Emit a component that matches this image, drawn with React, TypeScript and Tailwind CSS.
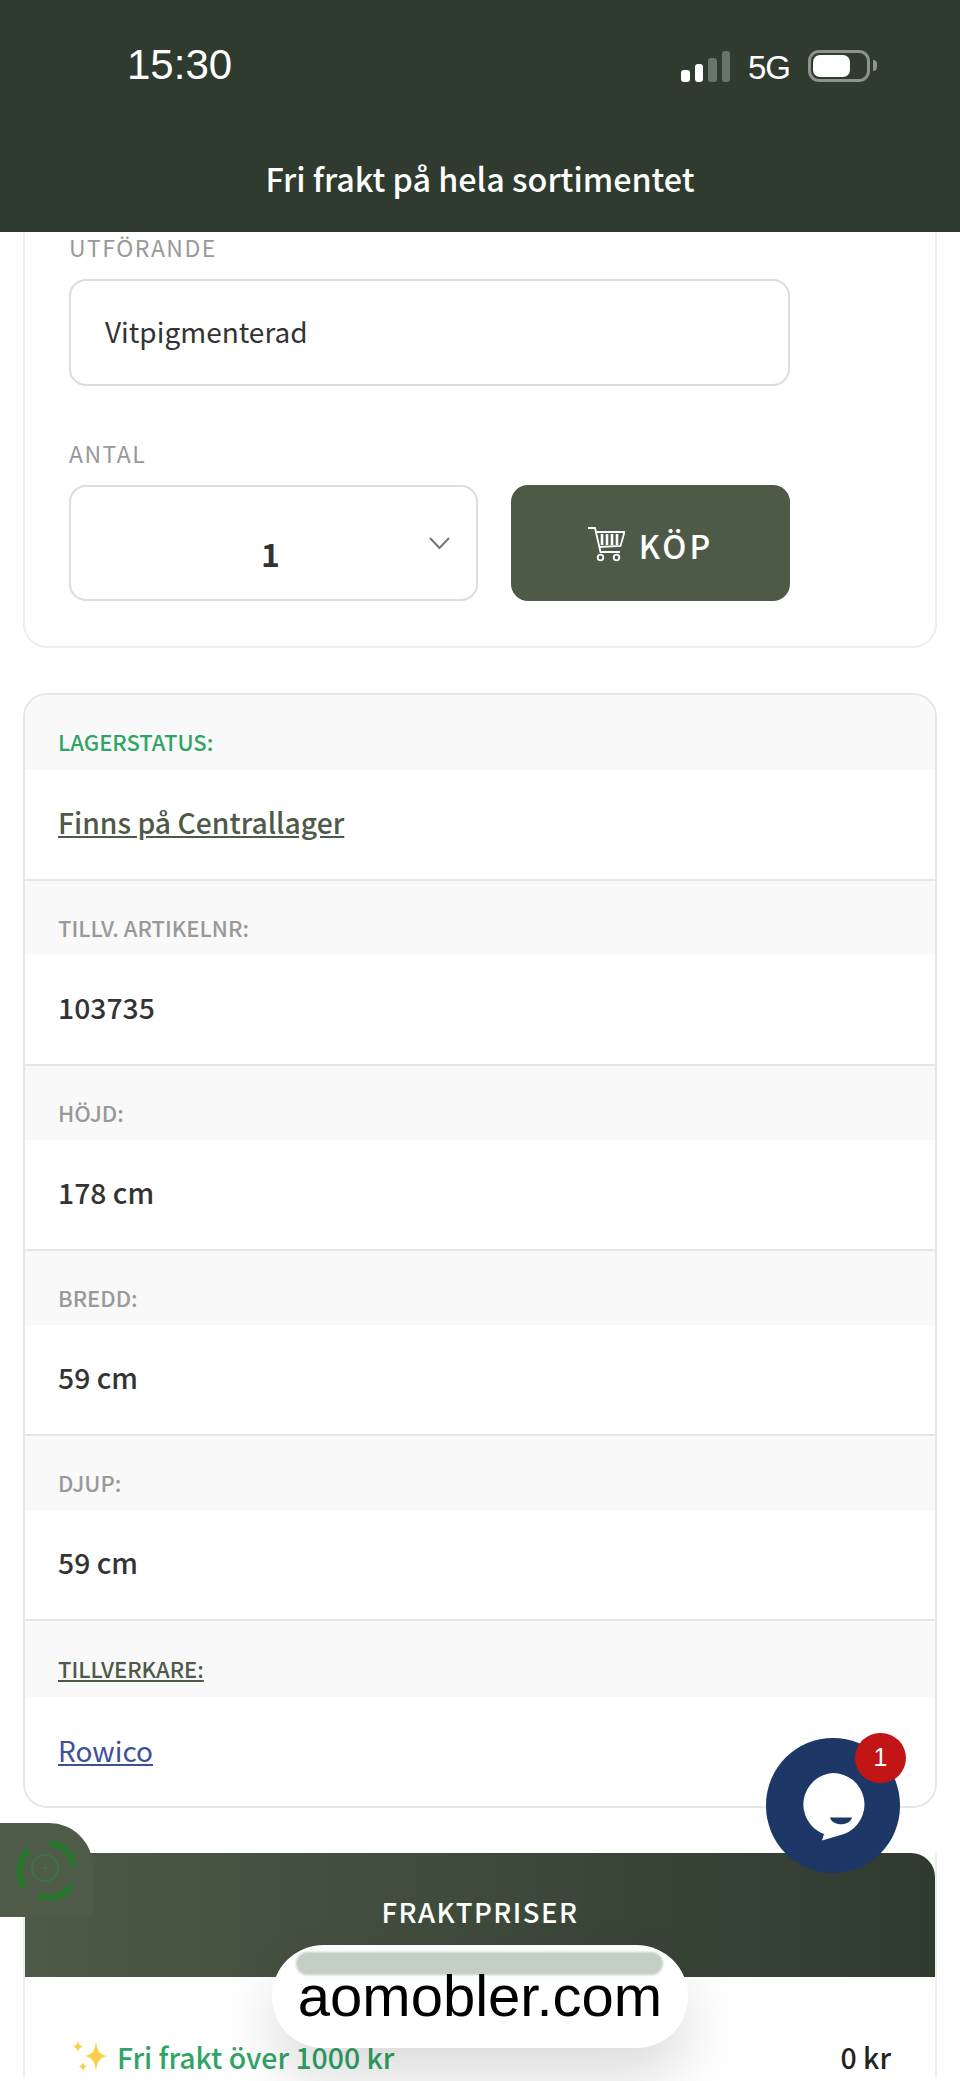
const SANS = "font-['Noto_Sans_CJK_SC','Noto_Sans',sans-serif]";
const SYSTEM = "font-['Liberation_Sans',sans-serif]";

const SPECS = [
  { label: "TILLV. ARTIKELNR:", value: "103735" },
  { label: "HÖJD:", value: "178 cm" },
  { label: "BREDD:", value: "59 cm" },
  { label: "DJUP:", value: "59 cm" },
];

function CartIcon() {
  return (
    <svg width="37" height="35" viewBox="0 0 37 35" fill="none" stroke="white" strokeWidth="1.8">
      <path d="M0 1h7l5.500 24H32" />
      <path d="M7.500 5h29l-4 14-21.500 1" />
      <path d="M14 7v11M19 7v11M24 7v11M29 7v11" strokeWidth="2.6" />
      <circle cx="12.500" cy="30.500" r="2.800" />
      <circle cx="28.500" cy="30.500" r="2.800" />
    </svg>
  );
}

function Sparkles() {
  return (
    <svg width="40" height="40" viewBox="0 0 40 40" fill="#fbcf4a">
      <path d="M25 4c1 9 3 14 12 15-9 1-11 7-12 15-1-8-3-14-12-15 9-1 11-6 12-15z" />
      <path d="M7 3c.5 4 1.500 5.500 5 6.500-3.500 1-4.500 2.500-5 6.500-.5-4-1.500-5.500-5-6.500 3.500-1 4.500-2.500 5-6.500z" />
      <path d="M12 24c.5 3.500 1.200 4.700 4.500 5.500-3.300.8-4 2-4.500 5.500-.5-3.500-1.200-4.700-4.500-5.500 3.300-.8 4-2 4.500-5.500z" />
    </svg>
  );
}

function SpecRow({ label, value }: { label: string; value: string }) {
  return (
    <div className="border-b-2 border-[#e6e6e6]">
      <div className="flex h-[74px] items-end bg-[#f9f9f9] px-[33px] pb-[14px] text-[22px] font-medium leading-[28px] text-[#999]">{label}</div>
      <div className="flex h-[109px] items-center bg-white px-[33px] pb-[4px] text-[28.300px] font-medium text-[#333]">{value}</div>
    </div>
  );
}

export default function App() {
  return (
    <div className={`relative h-[2081px] w-[960px] overflow-hidden bg-white ${SANS}`}>
      {/* Status bar + promo banner */}
      <header className="relative z-10 flex h-[232px] flex-col bg-[#2f3b2f] text-white">
        <div className={`flex h-[130px] items-center justify-between pl-[127px] pr-[83px] ${SYSTEM}`}>
          <span className="text-[42px] leading-none">15:30</span>
          <div className="flex items-end gap-[18px] pt-[1px]">
            <div className="flex items-end gap-[5px]">
              <div className="h-[12px] w-[9px] rounded-[3px] bg-white" />
              <div className="h-[18px] w-[8px] rounded-[3px] bg-white" />
              <div className="h-[24px] w-[9px] rounded-[3px] bg-[#6a756a]" />
              <div className="h-[31px] w-[8px] rounded-[3px] bg-[#6a756a]" />
            </div>
            <span className="text-[33px] leading-[28px] tracking-[-1px]">5G</span>
            <div className="flex items-center gap-[3px]">
              <div className="flex h-[32px] w-[62px] items-center rounded-[11px] border-[3px] border-[#8b958b] p-[2px]">
                <div className="h-full w-[37px] rounded-[7px] bg-white" />
              </div>
              <div className="h-[11px] w-[4px] rounded-r-full bg-[#8b958b]" />
            </div>
          </div>
        </div>
        <div className="flex flex-1 items-start justify-center pt-[27px] text-[32.300px] font-medium leading-[42px]">Fri frakt på hela sortimentet</div>
      </header>

      <main className="flex flex-col gap-[45px] px-[23px]">
        {/* Buy card */}
        <section className="h-[416px] rounded-b-[24px] border-x-2 border-b-2 border-[#eee] px-[44px]">
          <div className="pt-[2px] text-[23px] leading-[26px] tracking-[1.5px] text-[#999]">UTFÖRANDE</div>
          <div className="mt-[19px] flex h-[107px] w-[721px] items-center rounded-[17px] border-2 border-[#ddd] px-[34px] pb-[4px] text-[28px] text-[#333]">Vitpigmenterad</div>
          <div className="mt-[54px] text-[23px] leading-[26px] tracking-[1.5px] text-[#999]">ANTAL</div>
          <div className="mt-[19px] flex w-[721px] gap-[33px]">
            <div className="relative flex h-[116px] w-[409px] items-center justify-center rounded-[17px] border-2 border-[#ddd] pr-[6px] pt-[20px] text-[32px] font-semibold text-[#333]">
              1
              <svg className="absolute right-[26px] top-[50px]" width="21" height="13" viewBox="0 0 21 13" fill="none" stroke="#777" strokeWidth="2">
                <path d="M1 1l9.500 10L20 1" />
              </svg>
            </div>
            <div className="flex h-[116px] flex-1 items-center justify-center gap-[14px] rounded-[17px] bg-[#4d5a47] pt-[3px] text-[32px] font-medium tracking-[3px] text-white">
              <CartIcon />
              KÖP
            </div>
          </div>
        </section>

        {/* Specs */}
        <section className="h-[1115px] overflow-hidden rounded-[24px] border-2 border-[#e6e6e6]">
          <div className="border-b-2 border-[#e6e6e6]">
            <div className="flex h-[75px] items-end bg-[#f9f9f9] px-[33px] pb-[15px] text-[22px] font-medium leading-[28px] text-[#2fa565]">LAGERSTATUS:</div>
            <div className="flex h-[109px] items-center bg-white px-[33px] pb-[4px] text-[28.300px] font-medium text-[#4d5a47] underline">Finns på Centrallager</div>
          </div>
          {SPECS.map((row) => (
            <SpecRow key={row.label} label={row.label} value={row.value} />
          ))}
          <div className="flex h-[76px] items-end bg-[#f9f9f9] px-[33px] pb-[15px] text-[22px] font-medium leading-[28px] text-[#4d5a47] underline">TILLVERKARE:</div>
          <div className="flex h-[109px] items-center bg-white px-[33px] pb-[4px] text-[28px] text-[#3f5196] underline">Rowico</div>
        </section>

        {/* Shipping */}
        <section className="border-x-2 border-[#eee]">
          <div className="flex h-[124px] items-center justify-center rounded-t-[24px] bg-gradient-to-r from-[#4d5a47] to-[#2f3b2f] pb-[6px] text-[27.500px] font-medium tracking-[1.5px] text-white">FRAKTPRISER</div>
          <div className="flex items-center justify-between pl-[46px] pr-[44px] pt-[59px] text-[28.400px] font-medium leading-[42px]">
            <span className="flex items-center gap-[6px] text-[#2fa565]">
              <Sparkles />
              Fri frakt över 1000 kr
            </span>
            <span className="text-[#222]">0 kr</span>
          </div>
        </section>
      </main>

      {/* Floating accessibility tab */}
      <div className="absolute left-0 top-[1823px] flex h-[94px] w-[93px] items-center justify-center rounded-tr-[44px] bg-[#4f5b49] pb-[4px] pr-[3px]">
        <svg width="64" height="64" viewBox="0 0 64 64" fill="none" stroke="#2a7430">
          <g strokeWidth="7">
            <path d="M37 7A26 26 0 0 1 60.300 29.700" />
            <path d="M58.700 48.700A26 26 0 0 1 25.300 59.700" />
            <path d="M12 51A26 26 0 0 1 16.300 14.300" />
          </g>
          <circle cx="32" cy="32" r="13" strokeWidth="2" stroke="#3f7045" />
          <path d="M32 27v10M27 32h10" strokeWidth="1.500" stroke="#3f7045" />
        </svg>
      </div>

      {/* Chat button */}
      <div className="absolute left-[766px] top-[1738px] flex h-[135px] w-[134px] items-center justify-center rounded-full bg-[#1d3766]">
        <svg width="64" height="70" viewBox="0 0 64 70">
          <path d="M32 2a31.500 31.500 0 0 1 11 61L21 69.500l2-6.500A31.500 31.500 0 0 1 32 2z" fill="white" />
          <path d="M29 46.500h22c-2 9-20 9-22 0z" fill="#1d3766" />
        </svg>
      </div>
      <div className={`absolute left-[855px] top-[1733px] flex h-[50px] w-[51px] items-center justify-center rounded-full bg-[#c21616] text-[25px] text-white ${SYSTEM}`}>1</div>

      {/* Safari address pill */}
      <div className={`absolute left-[272px] top-[1945px] flex h-[103px] w-[416px] items-center justify-center rounded-[52px] bg-white pb-[2px] text-[58px] leading-none text-black shadow-[0_30px_60px_rgba(0,0,0,0.14)] ${SYSTEM}`}>
        <div className="absolute left-[24px] right-[25px] top-[7px] h-[23px] rounded-[12px] bg-[#c3cfc3] blur-[1px]" />
        <span className="relative">aomobler.com</span>
      </div>
    </div>
  );
}
